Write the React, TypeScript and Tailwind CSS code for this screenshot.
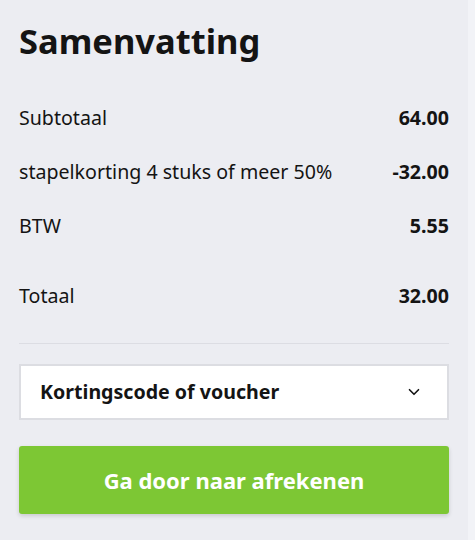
import { ChevronDown } from "lucide-react";

const rows = [
  { label: "Subtotaal", value: "64.00" },
  { label: "stapelkorting 4 stuks of meer 50%", value: "-32.00" },
  { label: "BTW", value: "5.55" },
];

export default function App() {
  return (
    <div
      className="flex h-[540px] w-[475px] bg-[#f2f3f7] text-[#141414]"
      style={{ fontFamily: '"Noto Sans", "Open Sans", sans-serif' }}
    >
      <section className="flex w-[468px] flex-col bg-[#ecedf2] px-[19px] pt-[19px]">
        <h1 className="text-[34.5px] font-bold leading-[44px]">Samenvatting</h1>

        <div className="mt-[28px] flex flex-col">
          {rows.map((r) => (
            <div key={r.label} className="flex h-[54px] items-center justify-between text-[19.6px]">
              <span>{r.label}</span>
              <span className="font-bold">{r.value}</span>
            </div>
          ))}
          <div className="mt-[16px] flex h-[54px] items-center justify-between text-[19.6px]">
            <span>Totaal</span>
            <span className="font-bold">32.00</span>
          </div>
        </div>

        <div className="mt-[20px] h-px bg-[#dcdde3]" />

        <button className="mt-[20px] flex h-[56px] items-center justify-between border-2 border-[#dcdde2] bg-white pl-[19px] pr-[24px] text-[19.6px] font-bold">
          <span>Kortingscode of voucher</span>
          <ChevronDown size={18} strokeWidth={2.2} />
        </button>

        <button className="mt-[26px] h-[68px] rounded-[3px] bg-[#7dc734] text-[22px] font-bold text-white shadow-[0_2px_4px_rgba(0,0,0,0.15)]">
          Ga door naar afrekenen
        </button>
      </section>
    </div>
  );
}
